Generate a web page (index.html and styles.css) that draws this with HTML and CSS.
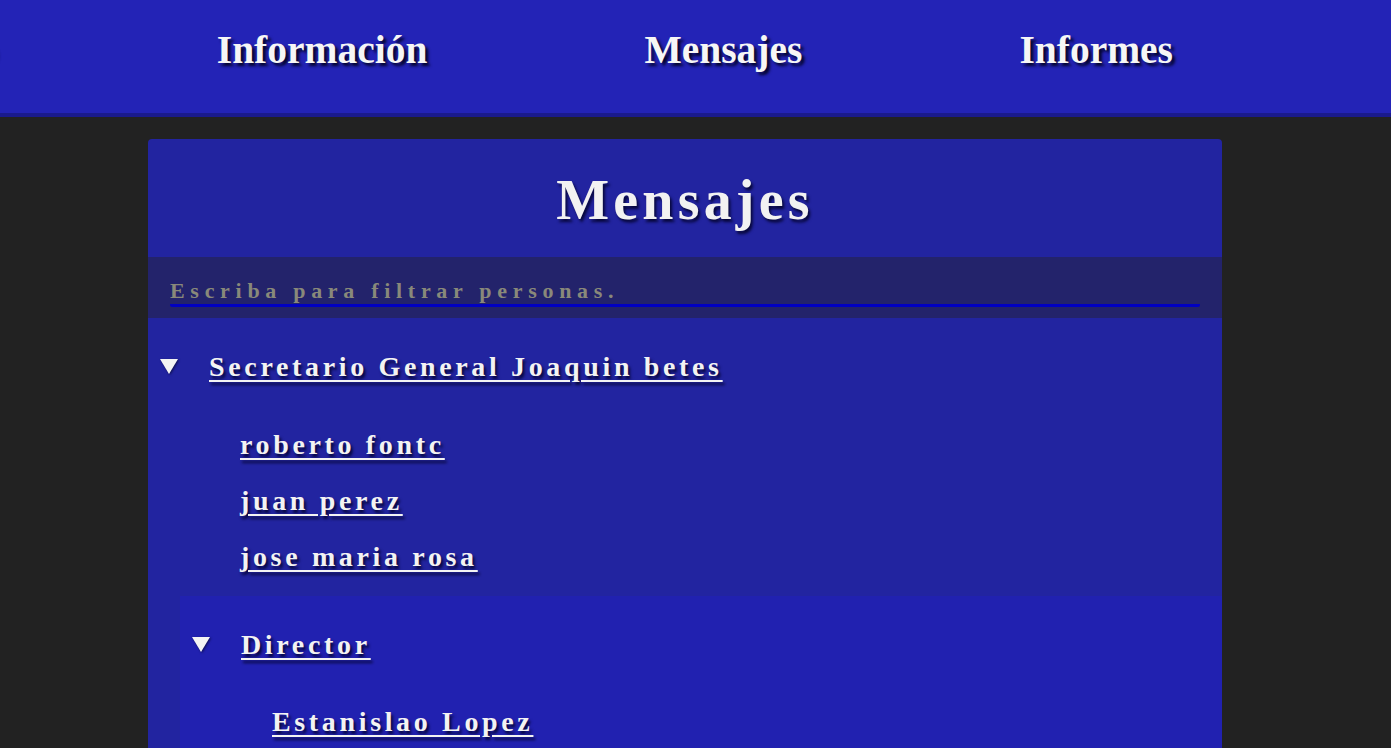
FILE: index.html
```html
<!DOCTYPE html>
<html lang="es">
<head>
<meta charset="utf-8">
<title>Mensajes</title>
<link rel="stylesheet" href="styles.css">
</head>
<body>
<header class="topbar">
  <nav class="nav">
    <a class="nav-item nav-first" href="#">Inicio</a>
    <a class="nav-item" href="#">Información</a>
    <a class="nav-item" href="#">Mensajes</a>
    <a class="nav-item" href="#">Informes</a>
  </nav>
</header>
<main class="panel">
  <div class="panel-head">
    <h1 class="panel-title">Mensajes</h1>
  </div>
  <div class="filter">
    <input class="filter-input" type="text" placeholder="Escriba para filtrar personas.">
  </div>
  <section class="group">
    <div class="group-row">
      <svg class="caret" width="18" height="15" viewBox="0 0 18 15"><polygon points="0,0 18,0 9,15" fill="#f4f4f4"/></svg>
      <a class="person head" href="#">Secretario General Joaquin betes</a>
    </div>
    <ul class="members">
      <li><a class="person" href="#">roberto fontc</a></li>
      <li><a class="person" href="#">juan perez</a></li>
      <li><a class="person" href="#">jose maria rosa</a></li>
    </ul>
    <section class="group nested">
      <div class="group-row">
        <svg class="caret" width="18" height="15" viewBox="0 0 18 15"><polygon points="0,0 18,0 9,15" fill="#f4f4f4"/></svg>
        <a class="person head" href="#">Director</a>
      </div>
      <ul class="members tight">
        <li><a class="person" href="#">Estanislao Lopez</a></li>
      </ul>
    </section>
  </section>
</main>
</body>
</html>
```

FILE: styles.css
```css
* { box-sizing: border-box; }

html, body {
  margin: 0;
  padding: 0;
  background: #222222;
  font-family: "Liberation Serif", "Times New Roman", serif;
  overflow: hidden;
}

.topbar {
  height: 117px;
  background: #2323b6;
  border-bottom: 4px solid #1a1a8c;
  overflow: hidden;
  padding-top: 27px;
}

.nav {
  display: flex;
  justify-content: flex-end;
  gap: 217px;
  padding-right: 218px;
  white-space: nowrap;
}

.nav-item {
  flex: none;
  font-size: 39.5px;
  font-weight: bold;
  color: #f6f6f6;
  text-decoration: none;
  line-height: normal;
  text-shadow: 3px 3px 3px #05052e;
}

.nav-first {
  margin-right: 3px;
}

.panel {
  width: 1074px;
  margin: 22px 0 0 148px;
  background: #2224a0;
  border-radius: 4px 4px 0 0;
}

.panel-head {
  padding: 29px 0 25px;
  text-align: center;
}

.panel-title {
  margin: 0;
  font-size: 56px;
  font-weight: bold;
  line-height: normal;
  letter-spacing: 4.2px;
  color: #f2f2f2;
  text-shadow: 2px 3px 3px #07073a;
}

.filter {
  background: #23236b;
  padding: 22px 22px 11px;
}

.filter-input {
  display: block;
  width: 100%;
  height: 28px;
  padding: 0 0 1px;
  margin: 0;
  border: none;
  border-bottom: 3px solid #0000c2;
  border-radius: 2px;
  background: transparent;
  font-family: "Liberation Serif", "Times New Roman", serif;
  font-size: 22px;
  font-weight: bold;
  line-height: 24px;
  letter-spacing: 5.7px;
  color: #ddd;
  outline: none;
}

.filter-input::placeholder {
  color: #89897a;
  opacity: 1;
}

.group {
  padding-top: 21px;
}

.group.nested {
  margin-left: 32px;
  background: #2121b0;
}

.group-row {
  display: flex;
  align-items: center;
  height: 56px;
  padding-left: 12px;
}

.caret {
  flex: none;
  margin-right: 31px;
  margin-top: -2px;
  filter: drop-shadow(1px 1px 1px rgba(0, 0, 30, 0.6));
}

.members {
  list-style: none;
  margin: 0 0 11px;
  padding: 22px 0 0 92px;
}

.members.tight {
  padding-top: 21px;
}

.members li {
  height: 56px;
  line-height: 56px;
}

.person {
  font-size: 28px;
  font-weight: bold;
  line-height: 56px;
  letter-spacing: 3.65px;
  color: #f3f3f3;
  text-decoration: underline;
  text-decoration-thickness: 2px;
  text-underline-offset: 4px;
  text-shadow: 2px 3px 3px #06063a;
}
```
